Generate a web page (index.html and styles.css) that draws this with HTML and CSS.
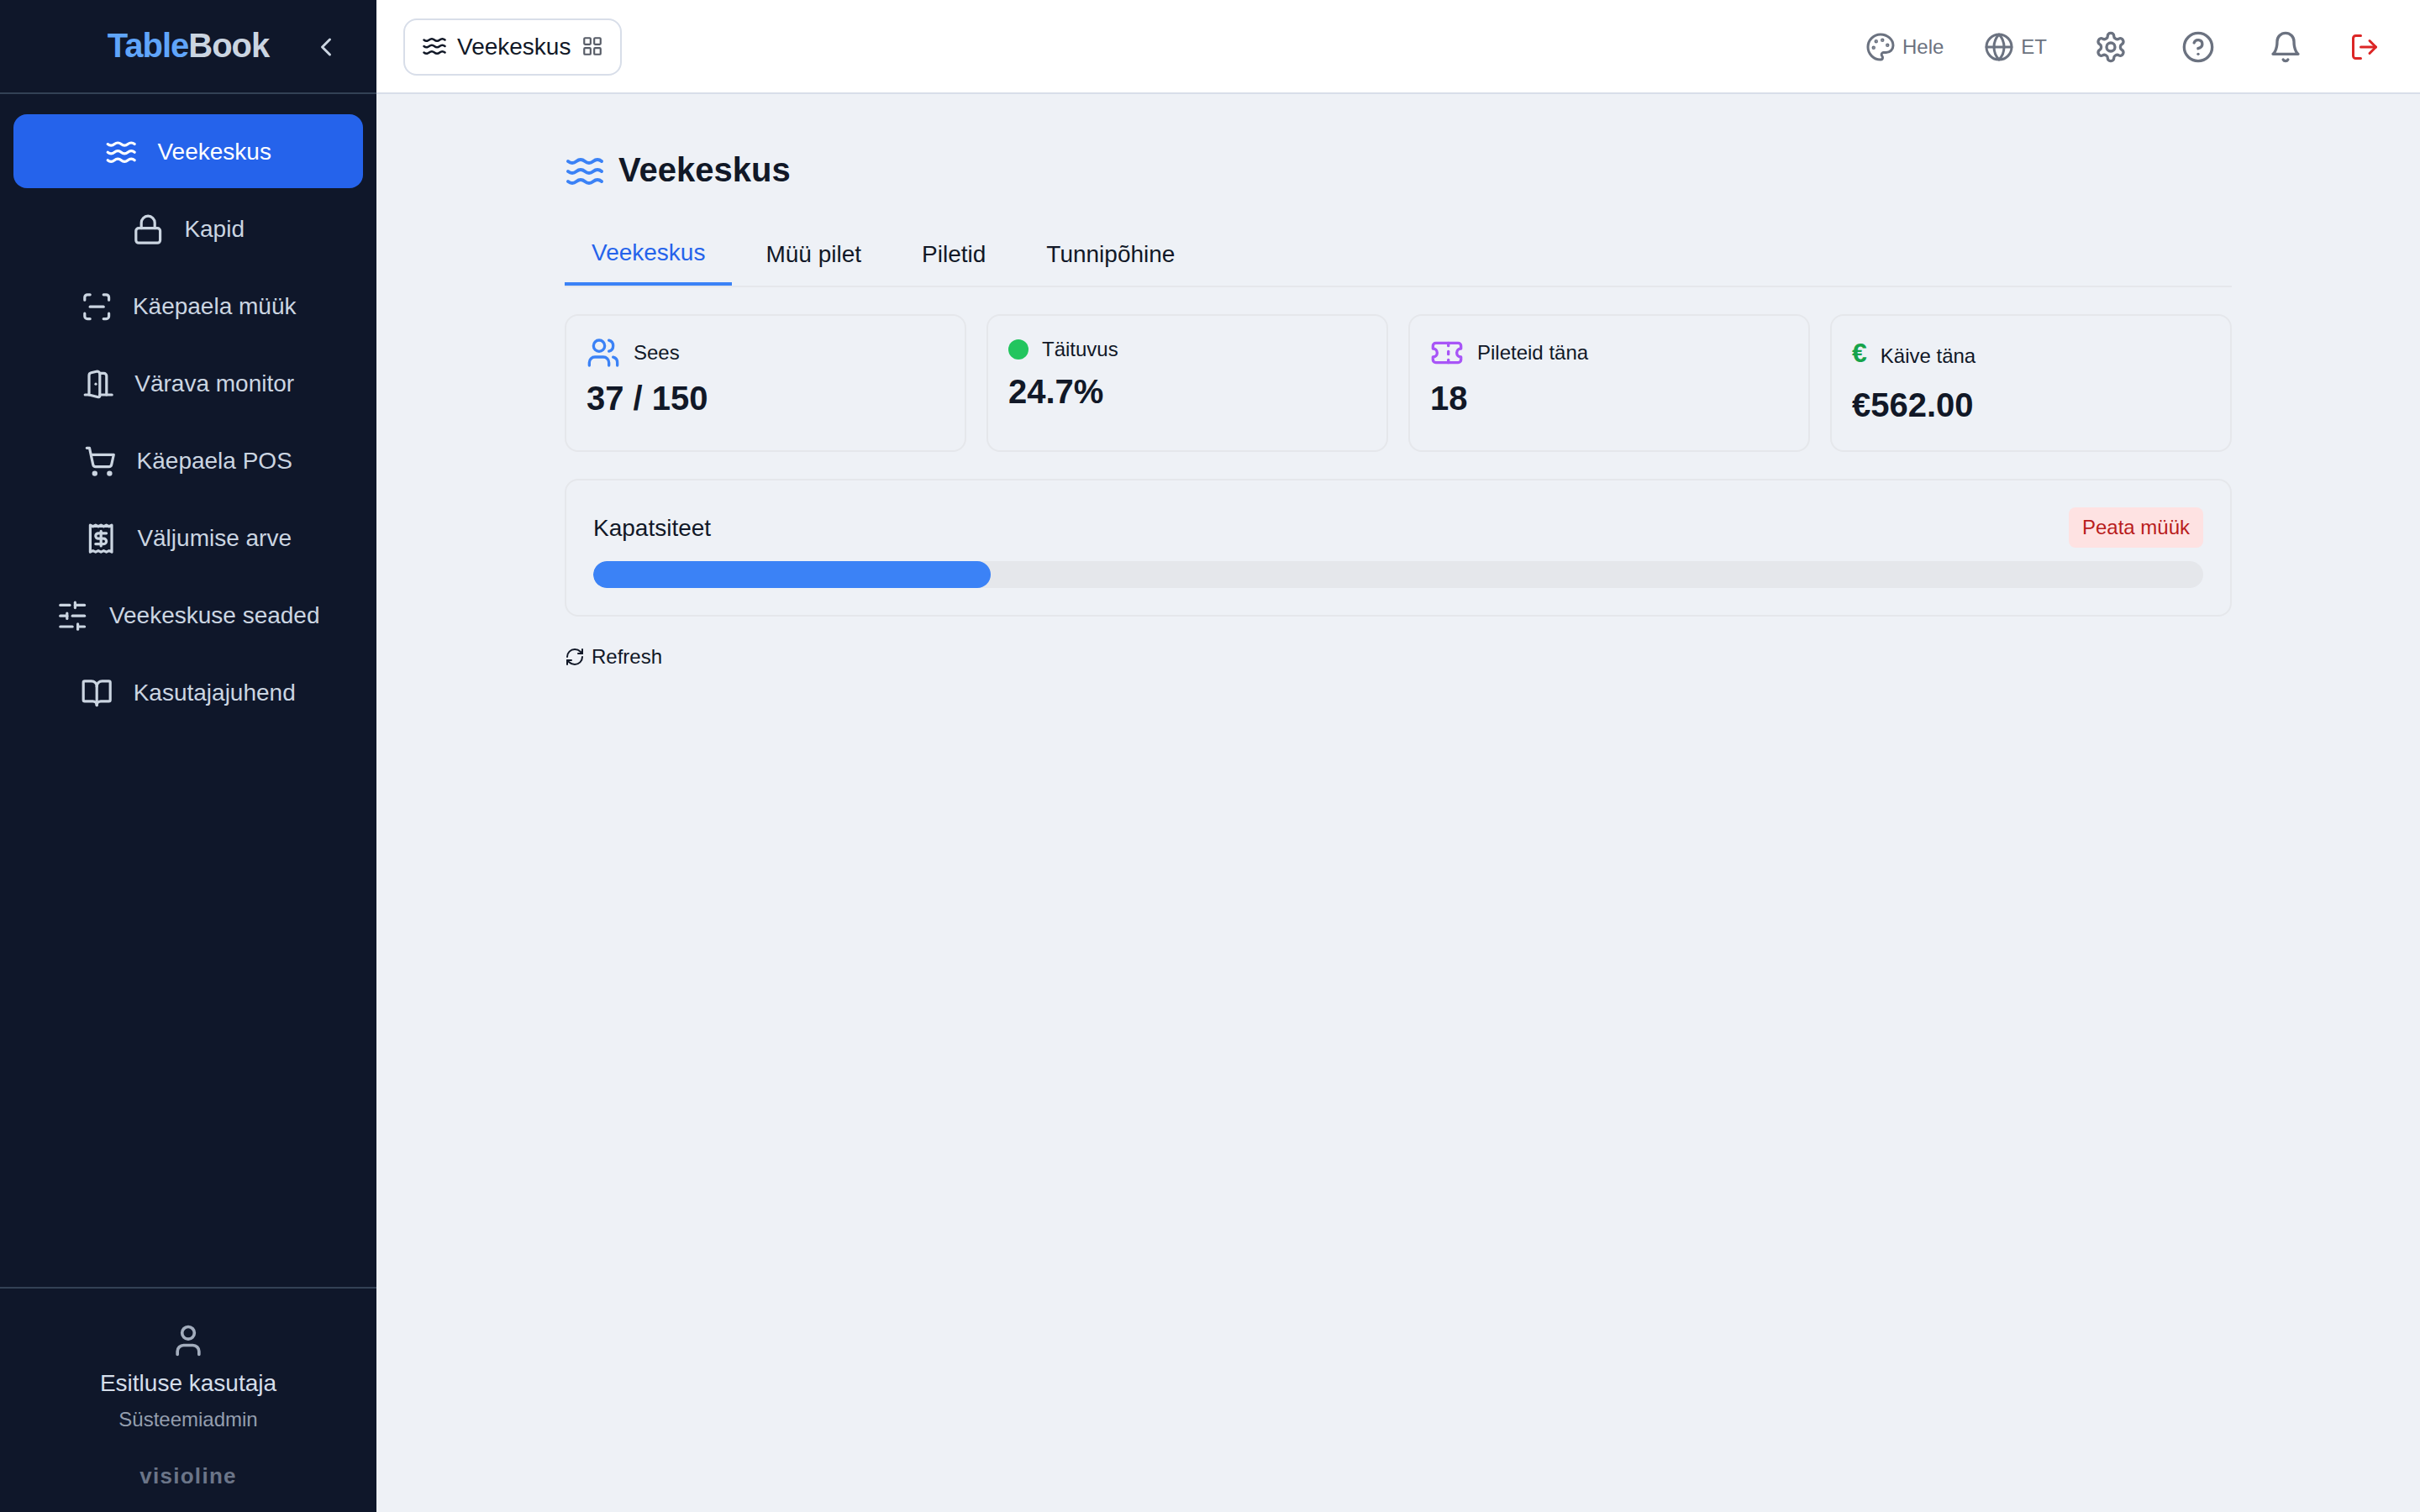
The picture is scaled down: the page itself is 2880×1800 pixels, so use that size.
FILE: index.html
```
<!DOCTYPE html>
<html lang="et">
<head>
    <meta charset="UTF-8">
    <title>TableBook - Veekeskus</title>
    <meta name="viewport" content="width=device-width, initial-scale=1.0">
    <link rel="stylesheet" href="styles.css">
</head>
<body>
    <!-- shared icon shapes -->
    <svg class="icon-defs" aria-hidden="true">
        <symbol id="i-waves" viewBox="0 0 24 24">
            <path d="M2 6c.6.5 1.2 1 2.5 1C7 7 7 5 9.5 5c2.6 0 2.4 2 5 2 2.5 0 2.5-2 5-2 1.3 0 1.9.5 2.5 1"/>
            <path d="M2 12c.6.5 1.2 1 2.5 1 2.5 0 2.5-2 5-2 2.6 0 2.4 2 5 2 2.5 0 2.5-2 5-2 1.3 0 1.9.5 2.5 1"/>
            <path d="M2 18c.6.5 1.2 1 2.5 1 2.5 0 2.5-2 5-2 2.6 0 2.4 2 5 2 2.5 0 2.5-2 5-2 1.3 0 1.9.5 2.5 1"/>
        </symbol>
    </svg>

    <aside class="sidebar">
        <div class="sidebar-header">
            <div class="logo"><span>Table</span>Book</div>
            <button class="collapse-btn" aria-label="Sulge">
                <svg class="icon" viewBox="0 0 24 24"><path d="m15 18-6-6 6-6"/></svg>
            </button>
        </div>
        <nav class="sidebar-nav">
            <a class="nav-item active">
                <svg class="icon"><use href="#i-waves"/></svg>
                <span>Veekeskus</span>
            </a>
            <a class="nav-item">
                <svg class="icon" viewBox="0 0 24 24"><rect x="3" y="11" width="18" height="11" rx="2"/><path d="M7 11V7a5 5 0 0 1 10 0v4"/></svg>
                <span>Kapid</span>
            </a>
            <a class="nav-item">
                <svg class="icon" viewBox="0 0 24 24"><path d="M3 7V5a2 2 0 0 1 2-2h2"/><path d="M17 3h2a2 2 0 0 1 2 2v2"/><path d="M21 17v2a2 2 0 0 1-2 2h-2"/><path d="M7 21H5a2 2 0 0 1-2-2v-2"/><path d="M7 12h10"/></svg>
                <span>Käepaela müük</span>
            </a>
            <a class="nav-item">
                <svg class="icon" viewBox="0 0 24 24"><path d="M13 4h3a2 2 0 0 1 2 2v14"/><path d="M2 20h3"/><path d="M13 20h9"/><path d="M10 12v.01"/><path d="M13 4.562v16.157a1 1 0 0 1-1.242.97L5 20V5.562a2 2 0 0 1 1.515-1.94l4-1A2 2 0 0 1 13 4.561Z"/></svg>
                <span>Värava monitor</span>
            </a>
            <a class="nav-item">
                <svg class="icon" viewBox="0 0 24 24"><circle cx="8" cy="21" r="1"/><circle cx="19" cy="21" r="1"/><path d="M2.05 2.05h2l2.66 12.42a2 2 0 0 0 2 1.58h9.78a2 2 0 0 0 1.95-1.57l1.65-7.43H5.12"/></svg>
                <span>Käepaela POS</span>
            </a>
            <a class="nav-item">
                <svg class="icon" viewBox="0 0 24 24"><path d="M4 2v20l2-1 2 1 2-1 2 1 2-1 2 1 2-1 2 1V2l-2 1-2-1-2 1-2-1-2 1-2-1-2 1Z"/><path d="M16 8h-6a2 2 0 1 0 0 4h4a2 2 0 1 1 0 4H8"/><path d="M12 17.5v-11"/></svg>
                <span>Väljumise arve</span>
            </a>
            <a class="nav-item">
                <svg class="icon" viewBox="0 0 24 24"><path d="M21 4h-7"/><path d="M10 4H3"/><path d="M21 12h-9"/><path d="M8 12H3"/><path d="M21 20h-5"/><path d="M12 20H3"/><path d="M14 2v4"/><path d="M8 10v4"/><path d="M16 18v4"/></svg>
                <span>Veekeskuse seaded</span>
            </a>
            <a class="nav-item">
                <svg class="icon" viewBox="0 0 24 24"><path d="M12 7v14"/><path d="M3 18a1 1 0 0 1-1-1V4a1 1 0 0 1 1-1h5a4 4 0 0 1 4 4 4 4 0 0 1 4-4h5a1 1 0 0 1 1 1v13a1 1 0 0 1-1 1h-6a3 3 0 0 0-3 3 3 3 0 0 0-3-3z"/></svg>
                <span>Kasutajajuhend</span>
            </a>
        </nav>
        <div class="sidebar-footer">
            <svg class="icon" viewBox="0 0 24 24"><path d="M19 21v-2a4 4 0 0 0-4-4H9a4 4 0 0 0-4 4v2"/><circle cx="12" cy="7" r="4"/></svg>
            <div class="user-name">Esitluse kasutaja</div>
            <div class="user-role">Süsteemiadmin</div>
            <div class="brand">visioline</div>
        </div>
    </aside>

    <div class="page">
        <header class="topbar">
            <button class="module-btn">
                <svg class="icon"><use href="#i-waves"/></svg>
                <span>Veekeskus</span>
                <svg class="icon grid-icon" viewBox="0 0 24 24"><rect x="3" y="3" width="7" height="7" rx="1"/><rect x="14" y="3" width="7" height="7" rx="1"/><rect x="14" y="14" width="7" height="7" rx="1"/><rect x="3" y="14" width="7" height="7" rx="1"/></svg>
            </button>
            <div class="topbar-actions">
                <button class="action">
                    <svg class="icon" viewBox="0 0 24 24"><circle cx="13.5" cy="6.5" r=".5" fill="currentColor"/><circle cx="17.5" cy="10.5" r=".5" fill="currentColor"/><circle cx="8.5" cy="7.5" r=".5" fill="currentColor"/><circle cx="6.5" cy="12.5" r=".5" fill="currentColor"/><path d="M12 2C6.5 2 2 6.5 2 12s4.5 10 10 10c.926 0 1.648-.746 1.648-1.688 0-.437-.18-.835-.437-1.125-.29-.289-.438-.652-.438-1.125a1.64 1.64 0 0 1 1.668-1.668h1.996c3.051 0 5.555-2.503 5.555-5.554C21.965 6.012 17.461 2 12 2z"/></svg>
                    <span>Hele</span>
                </button>
                <button class="action">
                    <svg class="icon" viewBox="0 0 24 24"><circle cx="12" cy="12" r="10"/><path d="M12 2a14.5 14.5 0 0 0 0 20 14.5 14.5 0 0 0 0-20"/><path d="M2 12h20"/></svg>
                    <span>ET</span>
                </button>
                <button class="action action-lg" aria-label="Seaded">
                    <svg class="icon" viewBox="0 0 24 24"><path d="M12.22 2h-.44a2 2 0 0 0-2 2v.18a2 2 0 0 1-1 1.73l-.43.25a2 2 0 0 1-2 0l-.15-.08a2 2 0 0 0-2.73.73l-.22.38a2 2 0 0 0 .73 2.73l.15.1a2 2 0 0 1 1 1.72v.51a2 2 0 0 1-1 1.74l-.15.09a2 2 0 0 0-.73 2.73l.22.38a2 2 0 0 0 2.73.73l.15-.08a2 2 0 0 1 2 0l.43.25a2 2 0 0 1 1 1.73V20a2 2 0 0 0 2 2h.44a2 2 0 0 0 2-2v-.18a2 2 0 0 1 1-1.73l.43-.25a2 2 0 0 1 2 0l.15.08a2 2 0 0 0 2.73-.73l.22-.39a2 2 0 0 0-.73-2.73l-.15-.08a2 2 0 0 1-1-1.74v-.5a2 2 0 0 1 1-1.74l.15-.09a2 2 0 0 0 .73-2.73l-.22-.38a2 2 0 0 0-2.73-.73l-.15.08a2 2 0 0 1-2 0l-.43-.25a2 2 0 0 1-1-1.73V4a2 2 0 0 0-2-2z"/><circle cx="12" cy="12" r="3"/></svg>
                </button>
                <button class="action action-lg" aria-label="Abi">
                    <svg class="icon" viewBox="0 0 24 24"><circle cx="12" cy="12" r="10"/><path d="M9.09 9a3 3 0 0 1 5.83 1c0 2-3 3-3 3"/><path d="M12 17h.01"/></svg>
                </button>
                <button class="action action-lg" aria-label="Teavitused">
                    <svg class="icon" viewBox="0 0 24 24"><path d="M6 8a6 6 0 0 1 12 0c0 7 3 9 3 9H3s3-2 3-9"/><path d="M10.3 21a1.94 1.94 0 0 0 3.4 0"/></svg>
                </button>
                <button class="action logout" aria-label="Logi välja">
                    <svg class="icon" viewBox="0 0 24 24"><path d="M9 21H5a2 2 0 0 1-2-2V5a2 2 0 0 1 2-2h4"/><path d="m16 17 5-5-5-5"/><path d="M21 12H9"/></svg>
                </button>
            </div>
        </header>

        <main class="content">
            <h1 class="page-title">
                <svg class="icon"><use href="#i-waves"/></svg>
                <span>Veekeskus</span>
            </h1>

            <div class="tabs">
                <button class="tab active">Veekeskus</button>
                <button class="tab">Müü pilet</button>
                <button class="tab">Piletid</button>
                <button class="tab">Tunnipõhine</button>
            </div>

            <div class="stats">
                <div class="card">
                    <div class="card-label">
                        <svg class="icon blue" viewBox="0 0 24 24"><path d="M16 21v-2a4 4 0 0 0-4-4H6a4 4 0 0 0-4 4v2"/><circle cx="9" cy="7" r="4"/><path d="M22 21v-2a4 4 0 0 0-3-3.87"/><path d="M16 3.13a4 4 0 0 1 0 7.75"/></svg>
                        <span>Sees</span>
                    </div>
                    <div class="card-value">37 / 150</div>
                </div>
                <div class="card">
                    <div class="card-label">
                        <i class="dot"></i>
                        <span>Täituvus</span>
                    </div>
                    <div class="card-value">24.7%</div>
                </div>
                <div class="card">
                    <div class="card-label">
                        <svg class="icon purple" viewBox="0 0 24 24"><path d="M2 9a3 3 0 0 1 0 6v2a2 2 0 0 0 2 2h16a2 2 0 0 0 2-2v-2a3 3 0 0 1 0-6V7a2 2 0 0 0-2-2H4a2 2 0 0 0-2 2Z"/><path d="M13 5v2"/><path d="M13 17v2"/><path d="M13 11v2"/></svg>
                        <span>Pileteid täna</span>
                    </div>
                    <div class="card-value">18</div>
                </div>
                <div class="card">
                    <div class="card-label">
                        <b class="euro">€</b>
                        <span>Käive täna</span>
                    </div>
                    <div class="card-value">€562.00</div>
                </div>
            </div>

            <div class="capacity">
                <div class="capacity-head">
                    <span class="capacity-title">Kapatsiteet</span>
                    <button class="stop-btn">Peata müük</button>
                </div>
                <div class="bar">
                    <div class="bar-fill" style="width: 24.7%"></div>
                </div>
            </div>

            <button class="refresh">
                <svg class="icon" viewBox="0 0 24 24"><path d="M3 12a9 9 0 0 1 9-9 9.75 9.75 0 0 1 6.74 2.74L21 8"/><path d="M21 3v5h-5"/><path d="M21 12a9 9 0 0 1-9 9 9.75 9.75 0 0 1-6.74-2.74L3 16"/><path d="M8 16H3v5"/></svg>
                <span>Refresh</span>
            </button>
        </main>
    </div>
</body>
</html>
```

FILE: styles.css
```
* {
    box-sizing: border-box;
}
body {
    margin: 0;
    display: flex;
    height: 100vh;
    background: #eef1f6;
    color: #111827;
    font-family: "Liberation Sans", Arial, sans-serif;
    font-size: 28px;
    line-height: 1.5;
}
button {
    background: none;
    border: none;
    padding: 0;
    margin: 0;
    font: inherit;
    color: inherit;
    cursor: pointer;
}
.icon {
    width: 40px;
    height: 40px;
    flex-shrink: 0;
    fill: none;
    stroke: currentColor;
    stroke-width: 2;
    stroke-linecap: round;
    stroke-linejoin: round;
}
.icon-defs {
    display: none;
}

/* sidebar */
.sidebar {
    width: 448px;
    flex-shrink: 0;
    display: flex;
    flex-direction: column;
    background: #0f172a;
    color: #cbd5e1;
}
.sidebar-header {
    display: grid;
    grid-template-columns: 1fr auto 1fr;
    align-items: center;
    height: 112px;
    border-bottom: 2px solid #334155;
}
.logo {
    grid-column: 2;
    padding-bottom: 2px;
    font-size: 40px;
    font-weight: bold;
    letter-spacing: -1px;
    line-height: 56px;
}
.logo span {
    color: #60a5fa;
}
.collapse-btn {
    justify-self: end;
    margin-right: 42px;
    height: 36px;
    margin-top: 2px;
}
.collapse-btn .icon {
    display: block;
    width: 36px;
    height: 36px;
}
.sidebar-nav {
    flex: 1;
    display: flex;
    flex-direction: column;
    gap: 4px;
    padding: 24px 16px;
}
.nav-item {
    display: flex;
    align-items: center;
    justify-content: center;
    gap: 24px;
    height: 88px;
    padding-top: 2px;
    border-radius: 16px;
}
.nav-item .icon {
    width: 38.4px;
    height: 38.4px;
}
.nav-item.active {
    background: #2563eb;
    color: #fff;
}
.sidebar-footer {
    height: 268px;
    padding-top: 40px;
    border-top: 2px solid #334155;
    text-align: center;
}
.sidebar-footer .icon {
    display: block;
    width: 44px;
    height: 44px;
    margin: 0 auto 8px;
    color: #a3adbd;
}
.user-name {
    color: #d5deea;
}
.user-role {
    margin-top: 4px;
    font-size: 24px;
    line-height: 36px;
    color: #949eae;
}
.brand {
    margin-top: 29px;
    font-size: 26px;
    font-weight: bold;
    letter-spacing: 1.3px;
    line-height: 40px;
    color: #6b7588;
}

/* top bar */
.page {
    flex: 1;
}
.topbar {
    display: flex;
    align-items: center;
    justify-content: space-between;
    height: 112px;
    padding: 0 32px;
    background: #fff;
    border-bottom: 2px solid #d8dee9;
}
.module-btn {
    display: flex;
    align-items: center;
    gap: 12px;
    height: 68px;
    padding: 0 20px;
    margin-top: 2px;
    border: 2px solid #d8dee9;
    border-radius: 16px;
}
.module-btn .icon {
    width: 30px;
    height: 30px;
    margin-bottom: 2px;
}
.module-btn .grid-icon {
    width: 26px;
    height: 26px;
    margin-left: 1px;
    opacity: 0.7;
}
.topbar-actions {
    display: flex;
    align-items: center;
    gap: 16px;
    margin-top: 2px;
    font-size: 24px;
    color: #6b7280;
}
.action {
    display: flex;
    align-items: center;
    gap: 8px;
    padding: 0 16px;
}
.action .icon {
    width: 36px;
    height: 36px;
}
.action-lg {
    padding: 0 24px;
}
.action-lg .icon {
    width: 40px;
    height: 40px;
}
.logout {
    color: #dc2626;
}

/* content */
.content {
    max-width: 2048px;
    margin: 0 auto;
    padding: 64px 32px;
}
.page-title {
    display: flex;
    align-items: center;
    gap: 16px;
    margin: 0 0 32px;
    font-size: 40px;
    line-height: 52px;
}
.page-title .icon {
    width: 48px;
    height: 48px;
    margin-top: 4px;
}
.page-title .icon,
.blue {
    color: #3b82f6;
}
.tabs {
    display: flex;
    gap: 8px;
    margin-bottom: 32px;
    border-bottom: 2px solid #e5e7eb;
}
.tab {
    height: 80px;
    padding: 6px 32px 0;
}
.tab.active {
    color: #2563eb;
    border-bottom: 4px solid #3b82f6;
}
.stats {
    display: grid;
    grid-template-columns: repeat(4, 1fr);
    gap: 24px;
    margin-bottom: 32px;
}
.card {
    padding: 24px;
    border: 2px solid #e5e7eb;
    border-radius: 16px;
}
.card-label {
    display: flex;
    align-items: center;
    gap: 16px;
    margin-bottom: 4px;
    font-size: 24px;
    line-height: 32px;
}
.card-value {
    font-size: 40px;
    font-weight: bold;
    line-height: 60px;
}
.dot {
    width: 24px;
    height: 24px;
    border-radius: 50%;
    background: #22c55e;
}
.purple {
    color: #a855f7;
}
.euro {
    padding-bottom: 8px;
    font-size: 32px;
    line-height: 40px;
    color: #16a34a;
}
.capacity {
    padding: 32px;
    margin-bottom: 32px;
    border: 2px solid #e5e7eb;
    border-radius: 16px;
}
.capacity-head {
    display: flex;
    align-items: center;
    justify-content: space-between;
    margin-bottom: 16px;
}
.capacity-title {
    padding-top: 2px;
}
.stop-btn {
    height: 48px;
    padding: 0 16px;
    border-radius: 8px;
    background: #fee2e2;
    color: #b91c1c;
    font-size: 24px;
}
.bar {
    height: 32px;
    border-radius: 16px;
    background: #e5e7eb;
    overflow: hidden;
}
.bar-fill {
    height: 100%;
    border-radius: 16px;
    background: #3b82f6;
}
.refresh {
    display: flex;
    align-items: center;
    gap: 8px;
    font-size: 24px;
    line-height: 32px;
}
.refresh .icon {
    width: 24px;
    height: 24px;
}
```
